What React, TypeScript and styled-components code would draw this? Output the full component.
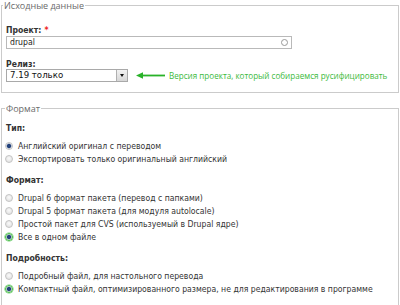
import React from "react";
import styled, { createGlobalStyle } from "styled-components";

const Global = createGlobalStyle`
  html, body { margin: 0; padding: 0; background: #fff; overflow: hidden; }
  body { font-family: "DejaVu Sans Condensed", "DejaVu Sans", Verdana, sans-serif; font-stretch: condensed; font-size: 8.6px; color: #333; }
`;

const Page = styled.div`
  width: 400px;
  height: 305px;
  overflow: hidden;
`;

const Fieldset = styled.fieldset<{ $top?: number; $bottom?: number }>`
  margin: ${(p) => p.$top ?? 0}px 1px 0 1px;
  padding: 0 4px ${(p) => p.$bottom ?? 10}px 4px;
  border: 1px solid #cbcbcb;
  min-width: 0;
  display: flex;
  flex-direction: column;
`;

const Legend = styled.legend<{ $shift?: number }>`
  font-family: "Open Sans", "Noto Sans", sans-serif;
  font-stretch: normal;
  font-size: 9px;
  line-height: 11px;
  color: #6a6a6a;
  padding: 0 1px;
  margin-left: ${(p) => p.$shift ?? -3}px;
`;

const Label = styled.div<{ $top?: number }>`
  font-weight: bold;
  line-height: 10px;
  color: #333;
  margin-top: ${(p) => p.$top ?? 10}px;
`;

const Required = styled.span`
  color: #e22;
  margin-left: 3px;
`;

const TextInput = styled.div`
  margin-top: 1px;
  width: 286px;
  height: 13px;
  box-sizing: border-box;
  border: 1px solid #b9b9b9;
  display: flex;
  align-items: center;
  justify-content: space-between;
  padding: 0 3px 0 3px;
  color: #222;
  line-height: 11px;
`;

const Throbber = styled.span`
  width: 5px;
  height: 5px;
  border-radius: 50%;
  border: 1px solid #999;
`;

const SelectRow = styled.div`
  display: flex;
  align-items: center;
  height: 13px;
`;

const Select = styled.div`
  width: 122px;
  height: 13px;
  box-sizing: border-box;
  border: 1px solid #a9a9a9;
  display: flex;
  align-items: stretch;
  color: #111;
  font-family: "DejaVu Sans", Verdana, sans-serif;
  font-stretch: normal;
`;

const SelectValue = styled.span`
  flex: 1;
  padding-left: 3px;
  line-height: 11px;
`;

const SelectButton = styled.span`
  width: 10px;
  background: linear-gradient(#f2f2f2, #d6d6d6);
  border-left: 1px solid #b0b0b0;
  display: flex;
  align-items: center;
  justify-content: center;
`;

const Caret = styled.span`
  width: 0;
  height: 0;
  border-left: 2.5px solid transparent;
  border-right: 2.5px solid transparent;
  border-top: 3px solid #111;
`;

const Note = styled.div`
  margin-left: 8px;
  display: flex;
  align-items: center;
  gap: 4px;
  color: #3cba3c;
  font-family: "Open Sans", "Noto Sans", sans-serif;
  font-stretch: normal;
  font-size: 8.1px;
  line-height: 11px;
  white-space: nowrap;
`;

const Options = styled.div<{ $top?: number }>`
  margin-top: ${(p) => p.$top ?? 6}px;
  display: flex;
  flex-direction: column;
`;

const Option = styled.div`
  display: flex;
  align-items: center;
  height: 13px;
  color: #333;
  white-space: nowrap;
`;

const Radio = styled.span<{ $checked?: boolean; $focus?: boolean }>`
  width: 8px;
  height: 8px;
  box-sizing: border-box;
  border-radius: 50%;
  margin-left: -1px;
  margin-right: 5px;
  flex: none;
  border: 1px solid ${(p) => (p.$focus ? "#3fb93f" : "#c4c4c4")};
  background: ${(p) =>
    p.$checked
      ? "radial-gradient(circle, #24427a 0 1.6px, #7f93b8 2.2px, #e9e9e9 2.8px)"
      : "radial-gradient(circle at 50% 40%, #fafafa, #dcdcdc)"};
  box-shadow: ${(p) => (p.$focus ? "0 0 0 0.6px #6fd06f" : "none")};
`;

const Arrow = () => (
  <svg width="29" height="7" viewBox="0 0 29 7">
    <polygon points="0,3.5 7,0.3 7,6.7" fill="#29b229" />
    <rect x="6" y="2.6" width="23" height="1.8" fill="#29b229" />
  </svg>
);

type Opt = { text: string; checked?: boolean; focus?: boolean };

const Group = ({ label, top, options }: { label: string; top?: number; options: Opt[] }) => (
  <>
    <Label $top={top}>{label}</Label>
    <Options>
      {options.map((o) => (
        <Option key={o.text}>
          <Radio $checked={o.checked} $focus={o.focus} />
          {o.text}
        </Option>
      ))}
    </Options>
  </>
);

export default function App() {
  return (
    <Page>
      <Global />
      <Fieldset>
        <Legend>Исходные данные</Legend>
        <Label $top={14}>
          Проект:<Required>*</Required>
        </Label>
        <TextInput>
          drupal
          <Throbber />
        </TextInput>
        <Label $top={10}>Релиз:</Label>
        <SelectRow>
          <Select>
            <SelectValue>7.19 только</SelectValue>
            <SelectButton>
              <Caret />
            </SelectButton>
          </Select>
          <Note>
            <Arrow />
            Версия проекта, который собираемся русифицировать
          </Note>
        </SelectRow>
      </Fieldset>
      <Fieldset $top={10} $bottom={30}>
        <Legend $shift={-1}>Формат</Legend>
        <Group
          label="Тип:"
          top={9}
          options={[
            { text: "Английский оригинал с переводом", checked: true },
            { text: "Экспортировать только оригинальный английский" },
          ]}
        />
        <Group
          label="Формат:"
          options={[
            { text: "Drupal 6 формат пакета (перевод с папками)" },
            { text: "Drupal 5 формат пакета (для модуля autolocale)" },
            { text: "Простой пакет для CVS (используемый в Drupal ядре)" },
            { text: "Все в одном файле", checked: true, focus: true },
          ]}
        />
        <Group
          label="Подробность:"
          options={[
            { text: "Подробный файл, для настольного перевода" },
            {
              text: "Компактный файл, оптимизированного размера, не для редактирования в программе",
              checked: true,
              focus: true,
            },
          ]}
        />
      </Fieldset>
    </Page>
  );
}
